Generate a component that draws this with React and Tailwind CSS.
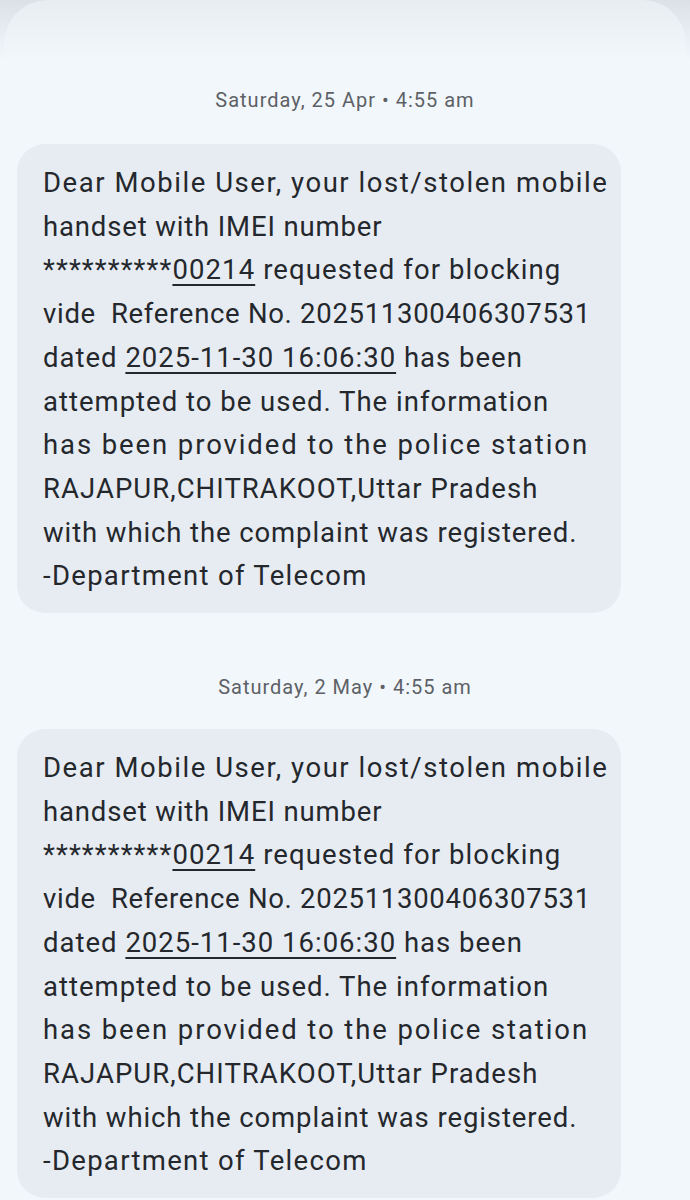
import React from "react";

const lines = [
  { t: "tracking-[1.55px]", p: ["Dear Mobile User, your lost/stolen mobile"] },
  { t: "tracking-[0.85px]", p: ["handset with IMEI number"] },
  { t: "tracking-[1.1px]", p: ["**********", { u: "00214" }, " requested for blocking"] },
  { t: "tracking-[0.7px]", p: ["vide\u00a0 Reference No. 202511300406307531"] },
  { t: "tracking-[1px]", p: ["dated ", { u: "2025-11-30 16:06:30" }, " has been"] },
  { t: "tracking-[1px]", p: ["attempted to be used. The information"] },
  { t: "tracking-[1.9px]", p: ["has been provided to the police station"] },
  { t: "tracking-[1.05px]", p: ["RAJAPUR,CHITRAKOOT,Uttar Pradesh"] },
  { t: "tracking-[0.9px]", p: ["with which the complaint was registered."] },
  { t: "tracking-[1.3px]", p: ["-Department of Telecom"] },
];

function Bubble() {
  return (
    <div className="ml-[17px] w-[604px] rounded-[28px] bg-[#e7ecf2] pl-[26px] pr-4 pt-[17px] pb-[15px] text-[27.5px] leading-[43.7px] text-[#24282d]">
      {lines.map((line, i) => (
        <div key={i} className={"whitespace-nowrap " + line.t}>
          {line.p.map((p, j) =>
            typeof p === "string" ? (
              <span key={j}>{p}</span>
            ) : (
              <span key={j} className="underline decoration-[2px] underline-offset-[5px]">
                {p.u}
              </span>
            )
          )}
        </div>
      ))}
    </div>
  );
}

function DateLabel({ children }) {
  return (
    <div className="text-center text-[20px] leading-6 text-[#5d6166] tracking-[1px]">
      {children}
    </div>
  );
}

export default function App() {
  return (
    <div
      className="relative min-h-[1200px] w-[690px] overflow-hidden bg-[#f2f7fc]"
      style={{ fontFamily: "Roboto, 'Noto Sans', sans-serif" }}
    >
      <div className="h-[60px] bg-gradient-to-b from-[#dce1e7] to-[#f2f7fc] px-[4px]">
        <div className="h-full rounded-t-[44px] bg-gradient-to-b from-[#e8edf2] to-[#f2f7fc]" />
      </div>
      <div className="pt-[28px]">
        <DateLabel>Saturday, 25 Apr • 4:55 am</DateLabel>
      </div>
      <div className="mt-[32px]">
        <Bubble />
      </div>
      <div className="mt-[62px]">
        <DateLabel>Saturday, 2 May • 4:55 am</DateLabel>
      </div>
      <div className="mt-[30px]">
        <Bubble />
      </div>
    </div>
  );
}
